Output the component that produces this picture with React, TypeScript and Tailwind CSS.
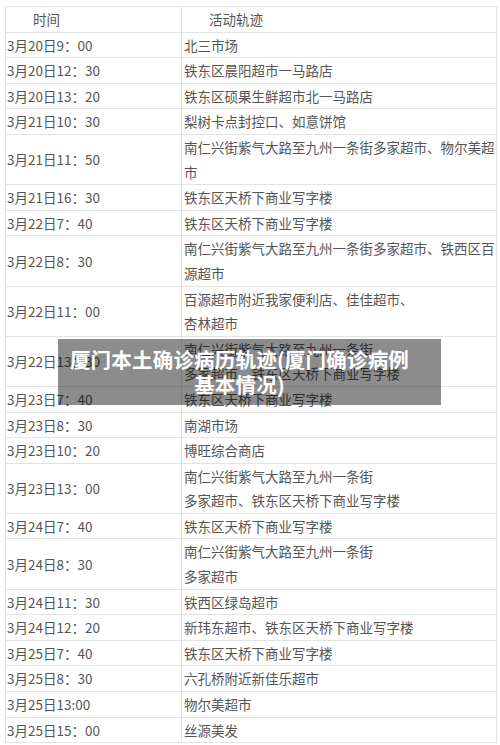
import * as React from 'react';

type Row = { time: string; place: React.ReactNode };

const rows: Row[] = [
  { time: '3月20日9：00', place: '北三市场' },
  { time: '3月20日12：30', place: '铁东区晨阳超市一马路店' },
  { time: '3月20日13：20', place: '铁东区硕果生鲜超市北一马路店' },
  { time: '3月21日10：30', place: '梨树卡点封控口、如意饼馆' },
  { time: '3月21日11：50', place: '南仁兴街紫气大路至九州一条街多家超市、物尔美超市' },
  { time: '3月21日16：30', place: '铁东区天桥下商业写字楼' },
  { time: '3月22日7：40', place: '铁东区天桥下商业写字楼' },
  { time: '3月22日8：30', place: '南仁兴街紫气大路至九州一条街多家超市、铁西区百源超市' },
  {
    time: '3月22日11：00',
    place: (
      <>
        百源超市附近我家便利店、佳佳超市、
        <br />
        杏林超市
      </>
    ),
  },
  {
    time: '3月22日13：30',
    place: (
      <>
        南仁兴街紫气大路至九州一条街
        <br />
        多家超市、铁东区天桥下商业写字楼
      </>
    ),
  },
  { time: '3月23日7：40', place: '铁东区天桥下商业写字楼' },
  { time: '3月23日8：30', place: '南湖市场' },
  { time: '3月23日10：20', place: '博旺综合商店' },
  {
    time: '3月23日13：00',
    place: (
      <>
        南仁兴街紫气大路至九州一条街
        <br />
        多家超市、铁东区天桥下商业写字楼
      </>
    ),
  },
  { time: '3月24日7：40', place: '铁东区天桥下商业写字楼' },
  {
    time: '3月24日8：30',
    place: (
      <>
        南仁兴街紫气大路至九州一条街
        <br />
        多家超市
      </>
    ),
  },
  { time: '3月24日11：30', place: '铁西区绿岛超市' },
  { time: '3月24日12：20', place: '新玮东超市、铁东区天桥下商业写字楼' },
  { time: '3月25日7：40', place: '铁东区天桥下商业写字楼' },
  { time: '3月25日8：30', place: '六孔桥附近新佳乐超市' },
  { time: '3月25日13:00', place: '物尔美超市' },
  { time: '3月25日15：00', place: '丝源美发' },
];

export default function App() {
  return (
    <div
      className="relative w-[500px] h-[745px] overflow-hidden bg-white pt-[6px] pl-[5px] text-[#555] text-[13.5px] leading-[24.6px]"
      style={{ fontFamily: '"Noto Sans CJK SC", "Noto Sans", sans-serif' }}
    >
      <table className="w-[491px] border-collapse table-fixed">
        <colgroup>
          <col className="w-[176px]" />
          <col className="w-[315px]" />
        </colgroup>
        <thead>
          <tr className="h-[25px]">
            <th className="border border-[#e3e3e3] pl-[27px] text-left font-normal">时间</th>
            <th className="border border-[#e3e3e3] pl-[27px] text-left font-normal">活动轨迹</th>
          </tr>
        </thead>
        <tbody>
          {rows.map((row) => (
            <tr key={row.time}>
              <td className="border border-[#e3e3e3] pl-[1px] align-middle whitespace-nowrap">{row.time}</td>
              <td className="border border-[#e3e3e3] pl-[2px] align-middle">{row.place}</td>
            </tr>
          ))}
        </tbody>
      </table>

      {/* Title overlay */}
      <div className="absolute left-[58px] top-[339px] w-[383px] h-[66px] bg-black/45 flex items-center justify-center pr-[20px]">
        <p className="text-white font-bold text-[20.5px] leading-[25px] text-center tracking-[0.2px]">
          厦门本土确诊病历轨迹(厦门确诊病例
          <br />
          基本情况)
        </p>
      </div>
    </div>
  );
}
